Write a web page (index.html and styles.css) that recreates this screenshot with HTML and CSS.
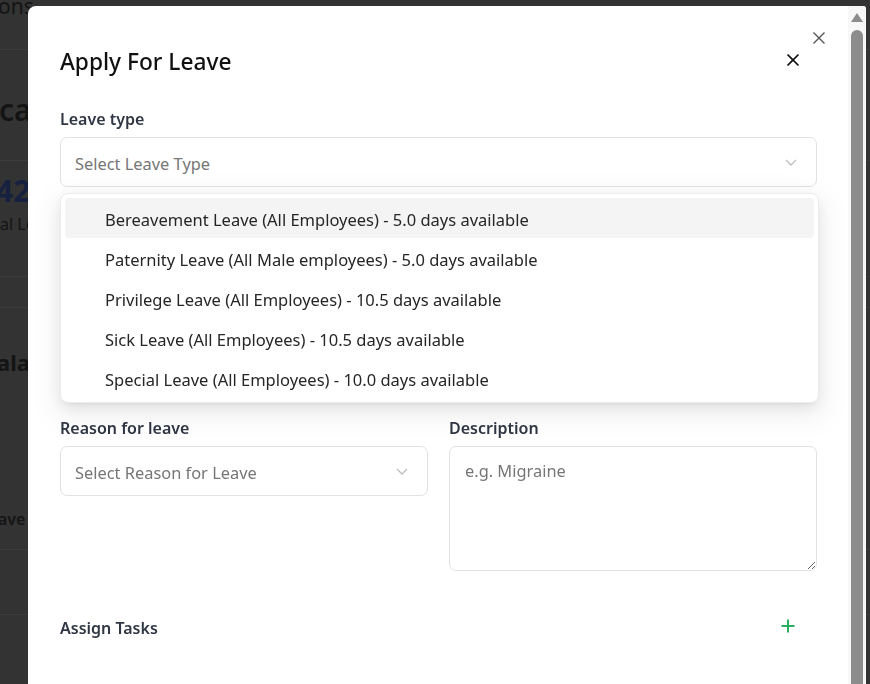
FILE: index.html
```html
<!DOCTYPE html>
<html lang="en">
<head>
<meta charset="utf-8">
<title>Apply For Leave</title>
<link rel="stylesheet" href="styles.css">
</head>
<body>
<div class="page">
  <div class="bg-row bg-r1"><span class="bg-nav">ons</span></div>
  <div class="bg-row bg-r2"><span class="bg-heading">cat</span></div>
  <div class="bg-row bg-r3"><span class="bg-num">42.</span><span class="bg-sub">al Le</span></div>
  <div class="bg-row bg-r4"></div>
  <div class="bg-row bg-r5"><span class="bg-title">alan</span><span class="bg-label">ave</span></div>
  <div class="bg-row bg-r6"></div>
  <div class="bg-row bg-r7"></div>
</div>

<div class="modal">
  <button class="modal-close" aria-label="Close">
    <svg width="14" height="14" viewBox="0 0 14 14"><path d="M1.5 1.5 L12.5 12.5 M12.5 1.5 L1.5 12.5" stroke="#555" stroke-width="1.4" fill="none"/></svg>
  </button>
  <div class="modal-body">
    <div class="header">
      <h1 class="title">Apply For Leave</h1>
      <button class="header-close" aria-label="Close">
        <svg width="14" height="14" viewBox="0 0 14 14"><path d="M1.5 1.5 L12.5 12.5 M12.5 1.5 L1.5 12.5" stroke="#111" stroke-width="1.7" fill="none"/></svg>
      </button>
    </div>

    <div class="form-item">
      <label class="label">Leave type</label>
      <div class="select-wrap">
        <div class="select">
          <span class="placeholder">Select Leave Type</span>
          <svg class="chev" width="12" height="7" viewBox="0 0 12 7"><path d="M1 1 L6 6 L11 1" stroke="#bdbdbd" stroke-width="1.3" fill="none"/></svg>
        </div>
        <ul class="dropdown">
          <li class="option active">Bereavement Leave (All Employees) - 5.0 days available</li>
          <li class="option">Paternity Leave (All Male employees) - 5.0 days available</li>
          <li class="option">Privilege Leave (All Employees) - 10.5 days available</li>
          <li class="option">Sick Leave (All Employees) - 10.5 days available</li>
          <li class="option">Special Leave (All Employees) - 10.0 days available</li>
        </ul>
      </div>
    </div>

    <div class="grid2 form-item">
      <div>
        <label class="label">Start date</label>
        <div class="select"><span class="placeholder">Select date</span></div>
      </div>
      <div>
        <label class="label">End date</label>
        <div class="select"><span class="placeholder">Select date</span></div>
      </div>
    </div>

    <div class="form-item">
      <label class="label">Duration</label>
      <div class="select"><span class="placeholder">Full day</span></div>
    </div>

    <div class="grid2 form-item">
      <div>
        <label class="label">Reason for leave</label>
        <div class="select">
          <span class="placeholder">Select Reason for Leave</span>
          <svg class="chev" width="12" height="7" viewBox="0 0 12 7"><path d="M1 1 L6 6 L11 1" stroke="#bdbdbd" stroke-width="1.3" fill="none"/></svg>
        </div>
      </div>
      <div>
        <label class="label">Description</label>
        <textarea class="textarea" placeholder="e.g. Migraine"></textarea>
      </div>
    </div>

    <div class="assign">
      <span class="assign-title">Assign Tasks</span>
      <button class="add" aria-label="Add task">
        <svg width="14" height="14" viewBox="0 0 14 14"><path d="M7 0.5 V13.5 M0.5 7 H13.5" stroke="#2aae62" stroke-width="2" fill="none"/></svg>
      </button>
    </div>
  </div>
  <div class="scrollbar">
    <div class="sb-arrow"></div>
    <div class="sb-thumb"></div>
  </div>
</div>
</body>
</html>
```

FILE: styles.css
```css
* { box-sizing: border-box; }

html, body {
  margin: 0;
  padding: 0;
  height: 100%;
  overflow: hidden;
}

body {
  background: #333333;
  font-family: "Noto Sans", "Open Sans", sans-serif;
  color: #222;
}

/* dimmed background page */
.page {
  display: flex;
  flex-direction: column;
  width: 100%;
}

.bg-row {
  border-bottom: 1px solid #3c3c3c;
  display: flex;
  flex-direction: column;
  color: #141414;
  white-space: nowrap;
  overflow: hidden;
}

.bg-r1 { height: 50px; }
.bg-r2 { height: 111px; justify-content: center; padding-top: 10px; }
.bg-r3 { height: 116px; padding-top: 12px; }
.bg-r4 { height: 31px; }
.bg-r5 { height: 242px; padding-top: 40px; }
.bg-r6 { height: 65px; }
.bg-r7 { height: 80px; border-bottom: none; }

.bg-nav { font-size: 21px; line-height: 20px; margin-top: -4px; margin-left: -2px; }
.bg-heading { font-size: 30px; font-weight: 600; line-height: 36px; margin-left: -1px; }
.bg-num { font-size: 30px; font-weight: 700; line-height: 36px; color: #16213f; margin-left: -4px; }
.bg-sub { font-size: 16px; line-height: 22px; margin-top: 4px; }
.bg-title { font-size: 22px; font-weight: 700; line-height: 28px; margin-left: -3px; }
.bg-label { font-size: 16px; font-weight: 600; line-height: 22px; margin-top: 132px; margin-left: -2px; }

/* modal */
.modal {
  position: fixed;
  top: 6px;
  left: 28px;
  right: 4px;
  bottom: -40px;
  background: #fff;
  border-radius: 8px 3px 0 0;
  display: flex;
  overflow: hidden;
}

.modal-close {
  position: absolute;
  top: 23px;
  right: 38px;
  width: 18px;
  height: 18px;
  padding: 2px;
  border: none;
  background: none;
  display: flex;
  align-items: center;
  justify-content: center;
}

.modal-body {
  flex: 1;
  padding: 40px 31px 0 32px;
  min-width: 0;
}

.header {
  display: flex;
  align-items: center;
  justify-content: space-between;
  margin-bottom: 29px;
}

.title {
  margin: 0;
  font-size: 22.7px;
  line-height: 32px;
  font-weight: 500;
  color: #111;
}

.header-close {
  width: 24px;
  height: 24px;
  margin-right: 12px;
  margin-top: -4px;
  padding: 0;
  border: none;
  background: none;
  display: flex;
  align-items: center;
  justify-content: center;
}

.form-item {
  margin-bottom: 23px;
}

.label {
  display: block;
  font-size: 16px;
  line-height: 24px;
  font-weight: 600;
  color: #303744;
  margin-bottom: 6px;
}

.select-wrap {
  position: relative;
}

.select {
  height: 50px;
  border: 1px solid #e2e2e2;
  border-radius: 7px;
  display: flex;
  align-items: center;
  justify-content: space-between;
  padding: 2px 19px 0 14px;
  background: #fff;
}

.placeholder {
  font-size: 16.4px;
  color: #767676;
}

.chev { flex: none; margin-top: -2px; }

.dropdown {
  position: absolute;
  top: calc(100% + 6px);
  left: 0;
  right: -2px;
  margin: 0;
  padding: 4px;
  list-style: none;
  background: #fff;
  border: 1px solid #ececec;
  border-radius: 8px;
  box-shadow: 0 6px 16px rgba(0,0,0,0.08), 0 3px 6px -4px rgba(0,0,0,0.12), 0 9px 28px 8px rgba(0,0,0,0.05);
  z-index: 10;
}

.option {
  height: 40px;
  display: flex;
  align-items: center;
  padding: 2px 0 0 40px;
  font-size: 16.5px;
  color: #262626;
  border-radius: 4px;
  white-space: nowrap;
}

.option.active {
  background: #f4f4f4;
}

.grid2 {
  display: grid;
  grid-template-columns: 1fr 1fr;
  column-gap: 21px;
}

.textarea {
  display: block;
  width: 100%;
  height: 125px;
  border: 1px solid #e2e2e2;
  border-radius: 7px;
  padding: 12px 15px;
  font-family: inherit;
  font-size: 16.4px;
  line-height: 24px;
  color: #222;
  resize: vertical;
  outline: none;
}

.textarea::placeholder {
  color: #767676;
}

.assign {
  margin-top: 45px;
  display: flex;
  align-items: center;
  justify-content: space-between;
}

.assign-title {
  font-size: 16px;
  line-height: 24px;
  font-weight: 600;
  color: #303744;
}

.add {
  width: 14px;
  height: 14px;
  margin-right: 22px;
  margin-top: -4px;
  padding: 0;
  border: none;
  background: none;
  display: flex;
}

/* modal scrollbar */
.scrollbar {
  width: 18px;
  flex: none;
  background: #f7f7f7;
  display: flex;
  flex-direction: column;
  align-items: center;
  padding-top: 7px;
}

.sb-arrow {
  width: 0;
  height: 0;
  border-left: 6px solid transparent;
  border-right: 6px solid transparent;
  border-bottom: 9px solid #8c8c8c;
}

.sb-thumb {
  margin-top: 8px;
  width: 12px;
  flex: 1;
  background: #8c8c8c;
  border-radius: 6px 6px 0 0;
}
```
